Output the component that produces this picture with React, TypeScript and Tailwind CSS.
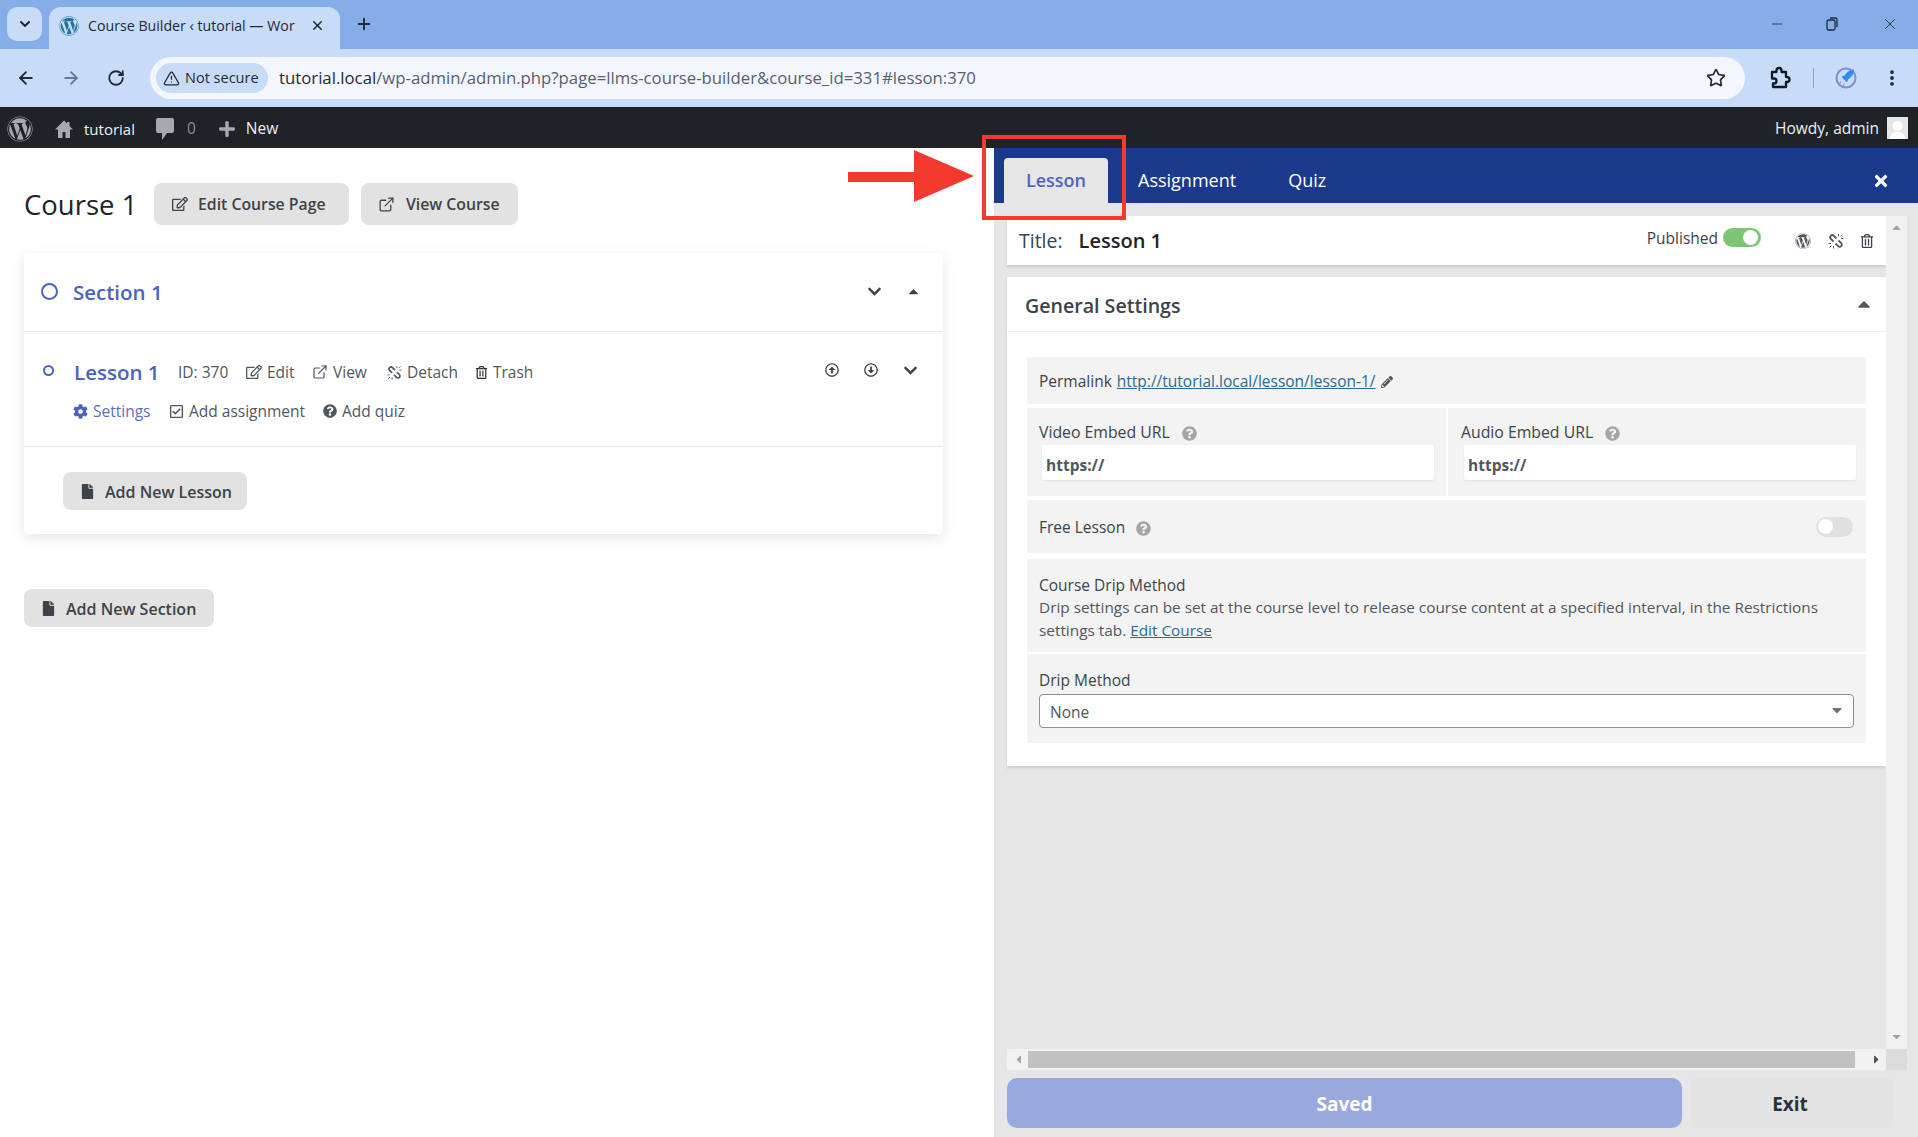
import { ArrowLeft, ArrowRight, ChevronDown, EllipsisVertical, ExternalLink, Minus, Plus, RotateCw, Star, TriangleAlert, X } from "lucide-react";
import {
  FaCaretDown,
  FaCaretLeft,
  FaCaretRight,
  FaCaretUp,
  FaChevronDown,
  FaCog,
  FaFile,
  FaPencilAlt,
  FaPlus,
  FaQuestionCircle,
  FaRegArrowAltCircleDown,
  FaRegArrowAltCircleUp,
  FaRegCheckSquare,
  FaRegEdit,
  FaRegTrashAlt,
  FaTimes,
  FaWordpress,
} from "react-icons/fa";

function BrokenChain({ size }: { size: number }) {
  return (
    <svg width={size} height={size} viewBox="0 0 16 16" fill="none" stroke="currentColor" className="shrink-0">
      <path d="M8.500 5.500 5.800 2.800a2.100 2.100 0 0 0-3 3L5.500 8.500M7.500 10.500l2.700 2.700a2.100 2.100 0 0 0 3-3L10.500 7.500" strokeWidth="1.800" />
      <path d="M10.500 1v2.500M12.700 3.300l1.800-1.800M13 5.500h2.500M.5 10.500H3M1.500 14.500l1.800-1.800M5.500 13v2.500" strokeWidth="0.900" />
    </svg>
  );
}

function BrowserChrome() {
  return (
    <>
      {/* Tab strip */}
      <div className="flex h-[49px] items-end bg-[#85ade8] text-[#1f2937]">
        <div className="mb-[8px] ml-[7px] flex h-[34px] w-[35px] items-center justify-center rounded-[10px] bg-[#c9dcf7]">
          <ChevronDown size={16} strokeWidth={3} />
        </div>
        <div className="ml-[7px] flex h-[42px] w-[291px] items-center rounded-t-[12px] bg-[#c9dcf7] pb-[5px] pl-[10px]">
          <FaWordpress className="text-[#21759b]" size={20} />
          <span className="ml-[9px] w-[206px] whitespace-nowrap text-[14.2px]">Course Builder ‹ tutorial — Wor</span>
          <X size={15} strokeWidth={2.5} className="ml-[16px]" />
        </div>
        <Plus size={18} strokeWidth={2.5} className="mb-[16px] ml-[15px]" />
        <div className="mb-[16px] ml-auto flex items-center gap-[39px] pr-[19px]">
          <Minus size={16} strokeWidth={1.2} />
          <svg width="16" height="16" viewBox="0 0 16 16" fill="none" stroke="currentColor" strokeWidth="1.3">
            <rect x="3" y="4" width="8" height="10" rx="1.5" />
            <path d="M6 2h5.500A1.500 1.500 0 0 1 13 3.500V11" />
          </svg>
          <X size={18} strokeWidth={1.2} className="ml-[2px]" />
        </div>
      </div>
      {/* Toolbar */}
      <div className="flex h-[58px] items-center bg-[#c9dcf7] text-[#1f2937]">
        <ArrowLeft size={20} strokeWidth={2.2} className="ml-[16px]" />
        <ArrowRight size={20} strokeWidth={2.2} className="ml-[25px] text-[#6b7a90]" />
        <RotateCw size={18} strokeWidth={2.4} className="ml-[26px]" />
        <div className="ml-[25px] flex h-[42px] w-[1595px] items-center rounded-full bg-[#f3f7fd] pl-[6px] pr-[19px]">
          <div className="flex h-[30px] w-[112px] items-center rounded-full bg-[#c9dcf7] pl-[7px] text-[14.5px]">
            <TriangleAlert size={17} strokeWidth={1.8} />
            <span className="ml-[5px] whitespace-nowrap">Not secure</span>
          </div>
          <div className="ml-[11px] whitespace-nowrap text-[16.75px] text-[#56606e]">
            <span className="text-[#1f2937]">tutorial.local</span>/wp-admin/admin.php?page=llms-course-builder&amp;course_id=331#lesson:370
          </div>
          <Star size={20} strokeWidth={2} className="ml-auto" />
        </div>
        <svg className="ml-[22px] text-[#111827]" width="24" height="24" viewBox="0 0 24 24" fill="none" stroke="currentColor" strokeWidth="2.300" strokeLinejoin="round">
          <path d="M5 6h4.500V4.500a2.500 2.500 0 0 1 5 0V6H19v5h1a2.500 2.500 0 0 1 0 5h-1v5H6v-3.500H7a2.500 2.500 0 0 0 0-5H5z" />
        </svg>
        <div className="ml-[22px] h-[20px] w-px bg-[#8aa2c4]" />
        <svg className="ml-[21px]" width="22" height="22" viewBox="0 0 22 22">
          <circle cx="11" cy="11" r="9.500" fill="none" stroke="#7b8fc8" strokeWidth="2" />
          <path d="M18.500 2.500c-4 .5-7 2.500-9 6l-3 1 1.500 2 2.500 2.500 1.500 1.500 1-3c3.500-2 5.500-5 6-10z" fill="#2f8df0" />
          <path d="M6 14.500l-2 3M9 16.500l-1 3" stroke="#b98ac9" strokeWidth="1.300" />
        </svg>
        <EllipsisVertical size={20} strokeWidth={2.6} className="ml-[25px]" />
      </div>
      {/* WP admin bar */}
      <div className="flex h-[41px] items-center bg-[#1d2327] pl-[7px] pt-[3px] text-[15.5px] text-[#f0f0f1]">
        <FaWordpress size={26} className="text-[#a7aaad]" />
        <svg width="20" height="20" viewBox="0 0 20 20" fill="#a7aaad" className="ml-[21px]">
          <path d="M10 1.500 1 10.500h3V19h4.500v-6h3v6H16v-8.500h3l-3.500-3.500V3H13v1.500z" />
        </svg>
        <span className="ml-[10px] text-[15px]">tutorial</span>
        <svg width="18" height="22" viewBox="0 0 18 22" fill="#a7aaad" className="ml-[21px]">
          <path d="M2 0h14a2 2 0 0 1 2 2v11a2 2 0 0 1-2 2h-5l-5 7v-7H2a2 2 0 0 1-2-2V2a2 2 0 0 1 2-2z" />
        </svg>
        <span className="ml-[13px] text-[#8c8f94]">0</span>
        <FaPlus size={18} className="ml-[22px] text-[#a7aaad]" />
        <span className="ml-[10px]">New</span>
        <span className="ml-auto">Howdy, admin</span>
        <div className="mb-[3px] ml-[8px] mr-[10px] flex h-[22px] w-[21px] items-end justify-center overflow-hidden bg-[#e6e6e6]">
          <svg width="17" height="19" viewBox="0 0 17 19" fill="#fff">
            <circle cx="8.500" cy="6" r="5" />
            <path d="M1 19c0-5 3-7 7.500-7s7.500 2 7.500 7z" />
          </svg>
        </div>
      </div>
    </>
  );
}

function GrayButton({ icon, label, className }: { icon: React.ReactNode; label: string; className: string }) {
  return (
    <div className={`flex items-center rounded-[8px] bg-[#e2e2e2] font-semibold text-[#3c434a] ${className}`}>
      {icon}
      <span className="pt-[2px]">{label}</span>
    </div>
  );
}

function LessonAction({ icon, label, className = "" }: { icon: React.ReactNode; label: string; className?: string }) {
  return (
    <span className={`flex items-center gap-[5px] ${className}`}>
      {icon}
      {label}
    </span>
  );
}

function CourseTree() {
  return (
    <div className="w-[994px] shrink-0 pl-[24px] pt-[35px]">
      <div className="flex h-[42px] items-center">
        <h1 className="w-[130px] pt-[1px] text-[27.5px] font-normal text-[#1d2327]">Course 1</h1>
        <GrayButton
          icon={<FaRegEdit size={16} className="ml-[18px] mr-[10px]" />}
          label="Edit Course Page"
          className="h-[42px] w-[195px] text-[15.800px]"
        />
        <GrayButton
          icon={<ExternalLink size={17} strokeWidth={1.8} className="ml-[17px] mr-[11px]" />}
          label="View Course"
          className="ml-[12px] h-[42px] w-[157px] text-[15.800px]"
        />
      </div>

      <div className="mt-[28px] h-[281px] w-[919px] rounded-[4px] bg-white shadow-[0_4px_14px_rgba(0,0,0,0.10)]">
        <div className="flex h-[79px] items-center border-b border-[#e8e8e8] pl-[17px]">
          <div className="size-[17px] -translate-y-[1px] rounded-full border-2 border-[#4a62c0]" />
          <span className="ml-[15px] pt-[1px] text-[20.5px] font-semibold text-[#4a62c0]">Section 1</span>
          <FaChevronDown size={15} className="ml-auto mr-[1px] -translate-y-[1px] text-[#3c434a]" />
          <FaCaretUp size={15} className="ml-[23px] mr-[22px] -translate-y-[1px] text-[#3c434a]" />
        </div>

        <div className="h-[115px] border-b border-[#e8e8e8]">
          <div className="flex items-center pl-[19px] pt-[25px] text-[15.5px] text-[#50575e]">
            <div className="size-[11px] -translate-y-[2px] rounded-full border-2 border-[#4a62c0]" />
            <span className="ml-[20px] w-[104px] text-[20.5px] font-semibold text-[#4a62c0]">Lesson 1</span>
            <span className="w-[68px]">ID: 370</span>
            <LessonAction icon={<FaRegEdit size={16} />} label="Edit" className="w-[66px]" />
            <LessonAction icon={<ExternalLink size={16} strokeWidth={1.8} />} label="View" className="w-[75px]" />
            <LessonAction icon={<BrokenChain size={15} />} label="Detach" className="w-[88px]" />
            <LessonAction icon={<FaRegTrashAlt size={13} className="text-[#2c3338]" />} label="Trash" />
            <div className="ml-auto mr-[25px] flex -translate-y-[2px] items-center gap-[25px] text-[#3c434a]">
              <FaRegArrowAltCircleUp size={14} />
              <FaRegArrowAltCircleDown size={14} />
              <FaChevronDown size={15} />
            </div>
          </div>
          <div className="mt-[12px] flex items-center pl-[49px] text-[15.5px] text-[#50575e]">
            <LessonAction icon={<FaCog size={15} className="text-[#4a62c0]" />} label="Settings" className="w-[96px] text-[#5b6fbd]" />
            <LessonAction icon={<FaRegCheckSquare size={15} />} label="Add assignment" className="w-[154px]" />
            <LessonAction icon={<FaQuestionCircle size={14} />} label="Add quiz" />
          </div>
        </div>

        <div className="pl-[39px] pt-[25px]">
          <GrayButton
            icon={<FaFile size={15} className="ml-[17px] mr-[10px]" />}
            label="Add New Lesson"
            className="h-[38px] w-[184px] text-[16px]"
          />
        </div>
      </div>

      <GrayButton
        icon={<FaFile size={15} className="ml-[17px] mr-[10px]" />}
        label="Add New Section"
        className="mt-[55px] h-[38px] w-[190px] text-[16px]"
      />
    </div>
  );
}

function Help() {
  return <FaQuestionCircle size={15} className="text-[#a3a5a8]" />;
}

function SettingsPanel() {
  return (
    <div className="flex min-w-0 flex-1 flex-col bg-[#e6e6e6]">
      {/* Tabs */}
      <div className="flex h-[55px] shrink-0 items-end bg-[#1c3a8c] pl-[10px] text-[18px] text-white">
        <div className="flex h-[45px] w-[104px] items-center justify-center rounded-t-[4px] bg-[#e6e6e6] font-semibold text-[#4f64c4]">Lesson</div>
        <div className="ml-[30px] flex h-[45px] items-center">Assignment</div>
        <div className="ml-[52px] flex h-[45px] items-center">Quiz</div>
        <FaTimes size={18} className="mb-[13px] ml-auto mr-[28px]" />
      </div>

      {/* Scrolling content */}
      <div className="flex h-[846px] shrink-0 pl-[13px]">
        <div className="w-[879px] pt-[13px]">
          <div className="flex h-[49px] items-center bg-white pl-[12px] shadow-[0_2px_3px_rgba(0,0,0,0.12)]">
            <span className="text-[19.5px] text-[#3c434a]">Title:</span>
            <span className="ml-[16px] text-[20px] font-semibold text-[#1d2327]">Lesson 1</span>
            <span className="ml-auto -translate-y-[2px] text-[15.5px] text-[#3c434a]">Published</span>
            <div className="ml-[5px] flex h-[19px] w-[38px] -translate-y-[3px] items-center justify-end rounded-full bg-[#7cc576] pr-[3px]">
              <div className="size-[15px] rounded-full bg-white" />
            </div>
            <FaWordpress size={16} className="ml-[34px] text-[#50575e]" />
            <div className="ml-[17px] text-[#50575e]">
              <BrokenChain size={16} />
            </div>
            <FaRegTrashAlt size={14} className="ml-[16px] mr-[12px] text-[#3c434a]" />
          </div>

          <div className="mt-[12px] h-[489px] bg-white shadow-[0_2px_3px_rgba(0,0,0,0.12)]">
            <div className="flex h-[55px] items-center border-b border-[#eeeeee] pl-[18px] pr-[12px]">
              <span className="pt-[3px] text-[19.6px] font-semibold text-[#3c434a]">General Settings</span>
              <FaCaretUp size={20} className="ml-auto text-[#50575e]" />
            </div>

            <div className="px-[20px] pt-[25px] text-[15.5px] text-[#3c434a]">
              <div className="flex h-[47px] items-center bg-[#f3f3f3] pl-[12px] pt-[2px]">
                Permalink
                <span className="ml-[5px] text-[#2b6a94] underline">http://tutorial.local/lesson/lesson-1/</span>
                <FaPencilAlt size={12} className="ml-[5px] text-[#50575e]" />
              </div>

              <div className="mt-[4px] flex h-[88px] gap-[2px]">
                <div className="flex-1 bg-[#f3f3f3] pl-[12px] pr-[12px] pt-[14px]">
                  <div className="flex h-[22px] items-center gap-[12px] text-[15.8px]">
                    Video Embed URL <Help />
                  </div>
                  <div className="ml-[3px] mt-[1px] flex h-[35px] items-center rounded-[2px] bg-white pl-[4px] pt-[7px] font-bold text-[#50575e] shadow-[0_1px_2px_rgba(0,0,0,0.08)]">https://</div>
                </div>
                <div className="flex-1 bg-[#f3f3f3] pl-[13px] pr-[10px] pt-[14px]">
                  <div className="flex h-[22px] items-center gap-[12px] text-[15.8px]">
                    Audio Embed URL <Help />
                  </div>
                  <div className="ml-[3px] mt-[1px] flex h-[35px] items-center rounded-[2px] bg-white pl-[4px] pt-[7px] font-bold text-[#50575e] shadow-[0_1px_2px_rgba(0,0,0,0.08)]">https://</div>
                </div>
              </div>

              <div className="mt-[4px] flex h-[53px] items-center bg-[#f3f3f3] pl-[12px] pr-[13px]">
                <span className="flex items-center gap-[11px] pt-[3px]">
                  Free Lesson <Help />
                </span>
                <div className="ml-auto flex h-[20px] w-[37px] items-center rounded-full bg-[#e0e0e0] pl-[2px]">
                  <div className="size-[15px] rounded-full bg-white" />
                </div>
              </div>

              <div className="mt-[6px] h-[93px] bg-[#f3f3f3] pl-[12px] pt-[15px] leading-[23px]">
                <div className="h-[22px]">Course Drip Method</div>
                <div className="w-[810px] text-[15.35px] text-[#50575e]">
                  Drip settings can be set at the course level to release course content at a specified interval, in the Restrictions settings tab.{" "}
                  <span className="text-[#2b6a94] underline">Edit Course</span>
                </div>
              </div>

              <div className="mt-[2px] h-[89px] bg-[#f3f3f3] px-[12px] pt-[15px]">
                <div className="h-[25px] leading-[22px]">Drip Method</div>
                <div className="flex h-[34px] items-center rounded-[4px] border border-[#8c8f94] bg-white pl-[10px] pr-[8px] pt-[4px] text-[#50575e]">
                  None
                  <FaCaretDown size={16} className="ml-auto -translate-y-[3px] text-[#6f7275]" />
                </div>
              </div>
            </div>
          </div>
        </div>
        {/* Vertical scrollbar */}
        <div className="mt-[13px] flex w-[21px] flex-col items-center justify-between bg-[#f1f1f1] pb-[6px] pt-[5px] text-[#a3a3a3]">
          <FaCaretUp size={13} />
          <FaCaretDown size={13} />
        </div>
      </div>

      {/* Horizontal scrollbar */}
      <div className="flex h-[21px] shrink-0 pl-[13px]">
        <div className="flex w-[879px] items-center bg-[#f1f1f1] text-[#505050]">
          <FaCaretLeft size={13} className="ml-[5px] text-[#a3a3a3]" />
          <div className="ml-[3px] h-[17px] w-[827px] bg-[#c1c1c1]" />
          <FaCaretRight size={13} className="ml-[15px]" />
        </div>
        <div className="w-[21px] bg-[#dcdcdc]" />
      </div>

      {/* Footer buttons */}
      <div className="mt-[8px] flex h-[50px] shrink-0 pl-[13px] text-[19px] font-bold">
        <div className="flex w-[675px] items-center justify-center rounded-[10px] bg-[#98a9dd] pt-[2px] text-white">Saved</div>
        <div className="ml-[9px] flex w-[202px] items-center justify-center rounded-[6px] bg-[#e3e3e3] pr-[4px] pt-[2px] text-[#2c3338]">Exit</div>
      </div>
    </div>
  );
}

export default function App() {
  return (
    <div className="relative flex h-screen w-full flex-col overflow-hidden bg-white font-['Open_Sans',sans-serif]">
      <BrowserChrome />
      <div className="flex min-h-0 flex-1">
        <CourseTree />
        <SettingsPanel />
      </div>

      {/* Tutorial annotation: arrow and highlight box */}
      <div className="absolute left-[982px] top-[135px] h-[85px] w-[144px] border-4 border-[#f4392f]" />
      <svg className="absolute left-[848px] top-[150px]" width="126" height="52" viewBox="0 0 126 52">
        <path d="M0 22h66V0l60 26-60 26V32H0z" fill="#f4392f" />
      </svg>
    </div>
  );
}
